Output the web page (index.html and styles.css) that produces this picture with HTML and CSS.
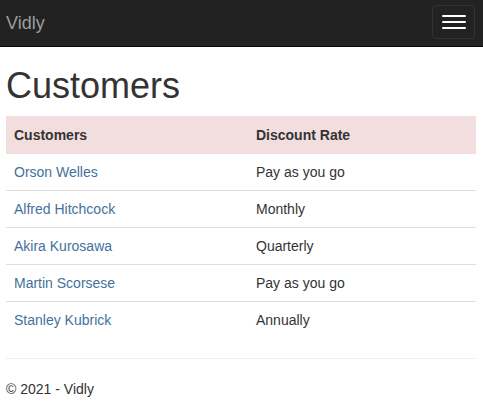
FILE: index.html
```html
<!DOCTYPE html>
<html lang="en">
<head>
<meta charset="utf-8">
<title>Customers - Vidly</title>
<link rel="stylesheet" href="styles.css">
</head>
<body>
<nav class="navbar">
  <a class="brand" href="#">Vidly</a>
  <button class="toggle" type="button" aria-label="Toggle navigation">
    <span class="bar"></span>
    <span class="bar"></span>
    <span class="bar"></span>
  </button>
</nav>
<main class="container">
  <h1 class="title">Customers</h1>
  <table class="table">
    <thead>
      <tr class="head-row">
        <th class="col-name">Customers</th>
        <th>Discount Rate</th>
      </tr>
    </thead>
    <tbody>
      <tr><td><a href="#">Orson Welles</a></td><td>Pay as you go</td></tr>
      <tr><td><a href="#">Alfred Hitchcock</a></td><td>Monthly</td></tr>
      <tr><td><a href="#">Akira Kurosawa</a></td><td>Quarterly</td></tr>
      <tr><td><a href="#">Martin Scorsese</a></td><td>Pay as you go</td></tr>
      <tr><td><a href="#">Stanley Kubrick</a></td><td>Annually</td></tr>
    </tbody>
  </table>
  <hr class="rule">
  <footer class="footer">
    <p>&copy; 2021 - Vidly</p>
  </footer>
</main>
</body>
</html>
```
FILE: styles.css
```css
* { box-sizing: border-box; }
html, body { margin: 0; padding: 0; }
body {
  font-family: "Liberation Sans", Arial, sans-serif;
  font-size: 14px;
  line-height: 1.42857;
  color: #333;
  background: #fff;
}
a { color: #44719c; text-decoration: none; }

.navbar {
  height: 47px;
  background: #222;
  border-bottom: 1px solid #080808;
  display: flex;
  align-items: center;
  justify-content: space-between;
  padding: 0 8px 0 6px;
}
.brand {
  color: #9d9d9d;
  font-size: 18px;
  line-height: 20px;
  padding-bottom: 1px;
}
.toggle {
  width: 43px;
  height: 34px;
  margin-bottom: 3px;
  background: transparent;
  border: 1px solid #333;
  border-radius: 4px;
  padding: 0;
  display: flex;
  flex-direction: column;
  align-items: center;
  justify-content: center;
  gap: 4px;
}
.bar {
  display: block;
  width: 24px;
  height: 2px;
  background: #fff;
  border-radius: 1px;
}

.container { padding: 0 7px 0 6px; }
.title {
  font-size: 36px;
  font-weight: 500;
  line-height: 1.1;
  margin: 19px 0 10px;
}
.table {
  width: 100%;
  border-collapse: collapse;
  border-spacing: 0;
  margin-bottom: 19px;
}
.table th, .table td {
  padding: 8px;
  text-align: left;
  line-height: 20px;
}
.table th { font-weight: bold; height: 38px; padding-top: 9px; }
.col-name { width: 242px; }
.head-row { background: #f2dede; }
.table tbody tr + tr td { border-top: 1px solid #ddd; }
.table td { height: 37px; }
.rule {
  margin: 0;
  border: 0;
  border-top: 1px solid #eee;
}
.footer p { margin: 21px 0 10px; }
```
